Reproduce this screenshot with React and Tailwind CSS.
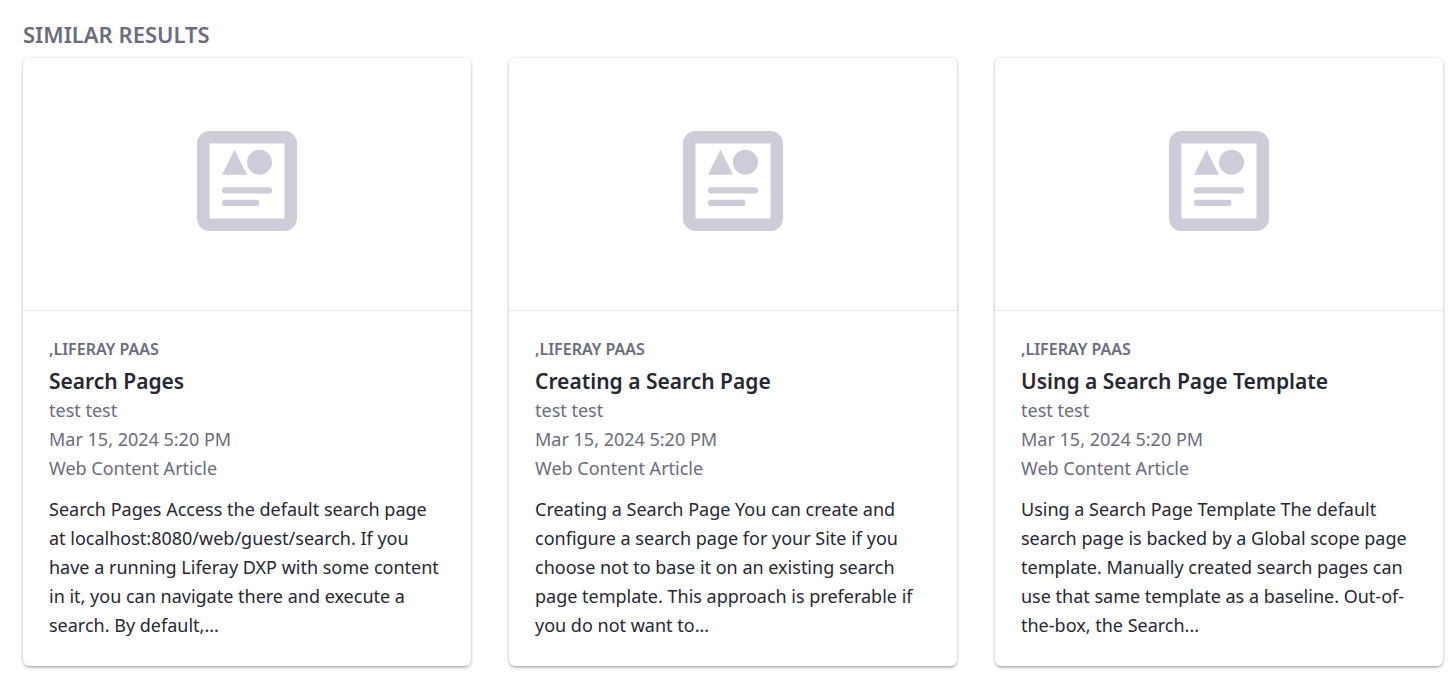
const results = [
  {
    title: "Search Pages",
    text: "Search Pages Access the default search page at localhost:8080/web/guest/search. If you have a running Liferay DXP with some content in it, you can navigate there and execute a search. By default,...",
  },
  {
    title: "Creating a Search Page",
    text: "Creating a Search Page You can create and configure a search page for your Site if you choose not to base it on an existing search page template. This approach is preferable if you do not want to...",
  },
  {
    title: "Using a Search Page Template",
    text: "Using a Search Page Template The default search page is backed by a Global scope page template. Manually created search pages can use that same template as a baseline. Out-of-the-box, the Search...",
  },
];

function ArticleIcon() {
  return (
    <svg viewBox="0 0 16 16" className="size-25 fill-[#cdcdda]" aria-hidden="true">
      <path
        fillRule="evenodd"
        d="M2 0h12a2 2 0 0 1 2 2v12a2 2 0 0 1-2 2H2a2 2 0 0 1-2-2V2a2 2 0 0 1 2-2zM2 2v12h12V2z"
      />
      <path d="M6 3l2 4H4z" />
      <circle cx="10" cy="5" r="2" />
      <rect x="4" y="9" width="8" height="1" rx="0.5" />
      <rect x="4" y="11" width="6" height="1" rx="0.5" />
    </svg>
  );
}

function ResultCard({ title, text }) {
  return (
    <article className="rounded-md bg-white shadow-[0_2px_4px_-2px_rgba(0,0,0,0.6),0_0_3px_rgba(0,0,0,0.14)]">
      <div className="flex h-[253px] items-center justify-center border-b border-[#e7e7e7] pb-1.5">
        <ArticleIcon />
      </div>
      <div className="px-[26px] pt-6 pb-[26px]">
        <p className="text-base leading-7 font-semibold text-[#6b6c7e] uppercase">,Liferay PaaS</p>
        <h3 className="mt-1 mb-px text-[21px] leading-7 font-semibold text-[#272833]">{title}</h3>
        <div className="text-lg leading-[29px] text-[#6b6c7e]">
          <p>test test</p>
          <p>Mar 15, 2024 5:20 PM</p>
          <p>Web Content Article</p>
        </div>
        <p className="mt-3 text-lg leading-[29px] text-[#272833]">{text}</p>
      </div>
    </article>
  );
}

export default function App() {
  return (
    <main className="bg-white pt-5 pr-[11px] pb-3 pl-[23px] font-['Noto_Sans',sans-serif]">
      <h2 className="mb-2.5 text-[22px] leading-7 font-semibold text-[#6b6c7e] uppercase">Similar Results</h2>
      <div className="grid grid-cols-3 gap-[38px]">
        {results.map((result) => (
          <ResultCard key={result.title} {...result} />
        ))}
      </div>
    </main>
  );
}
